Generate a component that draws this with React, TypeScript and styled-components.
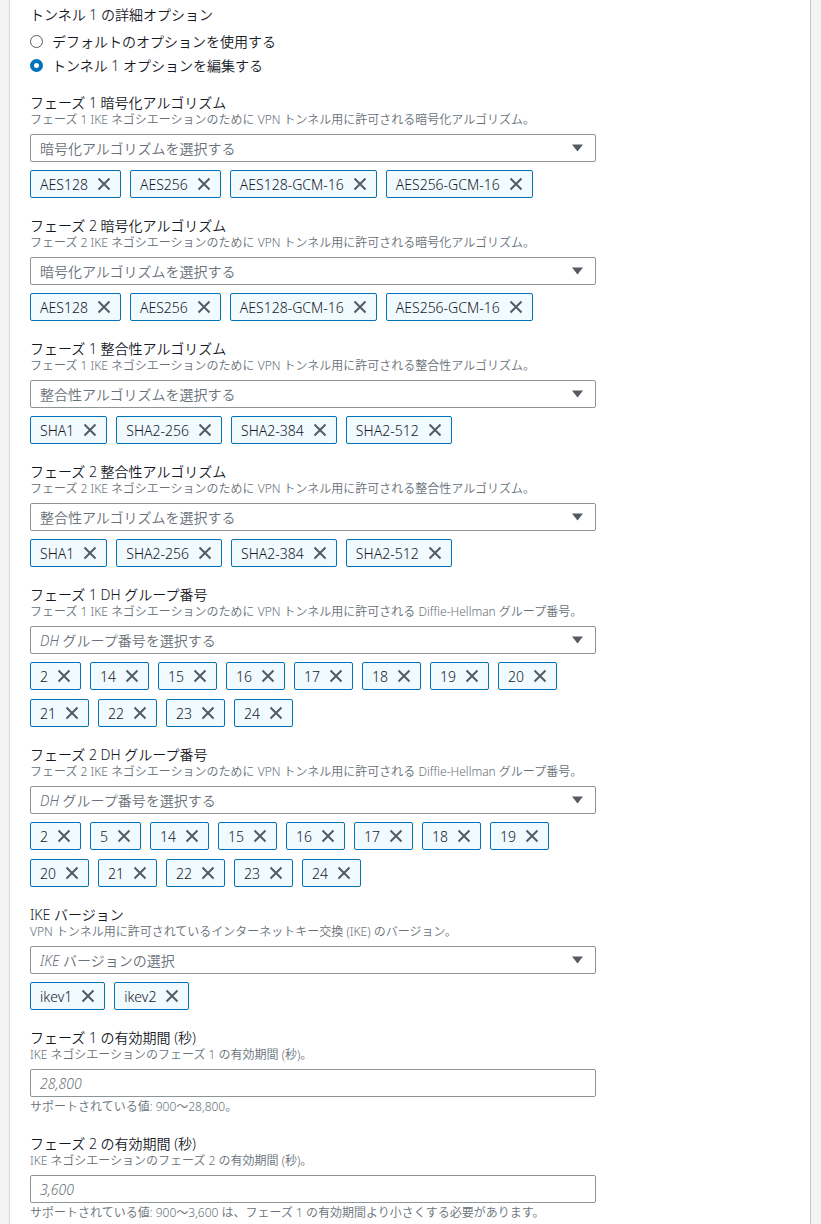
import React from "react";
import styled, { createGlobalStyle } from "styled-components";

const GlobalStyle = createGlobalStyle`
  html, body {
    margin: 0;
    padding: 0;
    background: #f2f3f3;
  }
  body {
    font-family: "Noto Sans", "Noto Sans CJK JP", sans-serif;
    font-weight: 350;
    font-synthesis: none;
    color: #16191f;
  }
`;

const Panel = styled.div`
  margin-left: 9px;
  width: 780px;
  min-height: 1240px;
  background: #ffffff;
  border-left: 1px solid #d5dbdb;
  border-right: 1px solid #c6c6c6;
  padding: 5px 0 0 20px;
`;

const Column = styled.div`
  width: 566px;
  display: flex;
  flex-direction: column;
`;

const Heading = styled.div`
  font-size: 14px;
  line-height: 20px;
`;

const RadioGroup = styled.div`
  display: flex;
  flex-direction: column;
  margin-top: 4px;
  margin-bottom: 17px;
`;

const RadioRow = styled.label`
  display: flex;
  align-items: center;
  gap: 9px;
  height: 24px;
  font-size: 14px;
`;

const RadioDot = styled.span<{ $checked?: boolean }>`
  width: 13px;
  height: 13px;
  border-radius: 50%;
  box-sizing: border-box;
  border: ${(p) => (p.$checked ? "4px solid #0073bb" : "1.5px solid #545b64")};
  background: #fff;
`;

const Field = styled.div<{ $gap?: number }>`
  display: flex;
  flex-direction: column;
  margin-bottom: ${(p) => p.$gap ?? 19}px;
`;

const Label = styled.div`
  font-size: 14px;
  line-height: 18px;
`;

const Description = styled.div`
  font-size: 12px;
  line-height: 16px;
  color: #687078;
`;

const Select = styled.div`
  margin-top: 6px;
  height: 28px;
  box-sizing: border-box;
  border: 1px solid #8d9596;
  border-radius: 2px;
  display: flex;
  align-items: center;
  justify-content: space-between;
  padding: 0 12px 0 9px;
`;

const Placeholder = styled.span`
  font-size: 14px;
  font-style: italic;
  color: #687078;
`;

const TagList = styled.div`
  margin-top: 8px;
  display: flex;
  flex-wrap: wrap;
  gap: 9px;
`;

const Tag = styled.div`
  height: 28px;
  box-sizing: border-box;
  border: 1px solid #0073bb;
  border-radius: 2px;
  background: #f1faff;
  display: flex;
  align-items: center;
  gap: 9px;
  padding: 0 9px 0 9px;
  font-size: 14px;
`;

const TextInput = styled.div`
  margin-top: 6px;
  height: 28px;
  box-sizing: border-box;
  border: 1px solid #8d9596;
  border-radius: 2px;
  display: flex;
  align-items: center;
  padding: 0 9px;
`;

const Constraint = styled.div`
  margin-top: 2px;
  font-size: 12px;
  line-height: 16px;
  color: #687078;
`;

const Caret = () => (
  <svg width="11" height="8" viewBox="0 0 11 8">
    <path d="M0 0.5 L11 0.5 L5.5 7.5 Z" fill="#545b64" />
  </svg>
);

const Dismiss = () => (
  <svg width="14" height="14" viewBox="0 0 14 14">
    <path d="M1.5 1.5 L12.5 12.5 M12.5 1.5 L1.5 12.5" stroke="#545b64" strokeWidth="2" fill="none" />
  </svg>
);

type MultiField = {
  label: string;
  desc: string;
  placeholder: string;
  tags: string[];
};

const aes = ["AES128", "AES256", "AES128-GCM-16", "AES256-GCM-16"];
const sha = ["SHA1", "SHA2-256", "SHA2-384", "SHA2-512"];
const dh1 = ["2", "14", "15", "16", "17", "18", "19", "20", "21", "22", "23", "24"];
const dh2 = ["2", "5", "14", "15", "16", "17", "18", "19", "20", "21", "22", "23", "24"];

const multiFields: MultiField[] = [
  {
    label: "フェーズ 1 暗号化アルゴリズム",
    desc: "フェーズ 1 IKE ネゴシエーションのために VPN トンネル用に許可される暗号化アルゴリズム。",
    placeholder: "暗号化アルゴリズムを選択する",
    tags: aes,
  },
  {
    label: "フェーズ 2 暗号化アルゴリズム",
    desc: "フェーズ 2 IKE ネゴシエーションのために VPN トンネル用に許可される暗号化アルゴリズム。",
    placeholder: "暗号化アルゴリズムを選択する",
    tags: aes,
  },
  {
    label: "フェーズ 1 整合性アルゴリズム",
    desc: "フェーズ 1 IKE ネゴシエーションのために VPN トンネル用に許可される整合性アルゴリズム。",
    placeholder: "整合性アルゴリズムを選択する",
    tags: sha,
  },
  {
    label: "フェーズ 2 整合性アルゴリズム",
    desc: "フェーズ 2 IKE ネゴシエーションのために VPN トンネル用に許可される整合性アルゴリズム。",
    placeholder: "整合性アルゴリズムを選択する",
    tags: sha,
  },
  {
    label: "フェーズ 1 DH グループ番号",
    desc: "フェーズ 1 IKE ネゴシエーションのために VPN トンネル用に許可される Diffie-Hellman グループ番号。",
    placeholder: "DH グループ番号を選択する",
    tags: dh1,
  },
  {
    label: "フェーズ 2 DH グループ番号",
    desc: "フェーズ 2 IKE ネゴシエーションのために VPN トンネル用に許可される Diffie-Hellman グループ番号。",
    placeholder: "DH グループ番号を選択する",
    tags: dh2,
  },
  {
    label: "IKE バージョン",
    desc: "VPN トンネル用に許可されているインターネットキー交換 (IKE) のバージョン。",
    placeholder: "IKE バージョンの選択",
    tags: ["ikev1", "ikev2"],
  },
];

const lifetimes = [
  {
    label: "フェーズ 1 の有効期間 (秒)",
    desc: "IKE ネゴシエーションのフェーズ 1 の有効期間 (秒)。",
    value: "28,800",
    note: "サポートされている値: 900～28,800。",
  },
  {
    label: "フェーズ 2 の有効期間 (秒)",
    desc: "IKE ネゴシエーションのフェーズ 2 の有効期間 (秒)。",
    value: "3,600",
    note: "サポートされている値: 900～3,600 は、フェーズ 1 の有効期間より小さくする必要があります。",
  },
];

export default function App() {
  return (
    <>
      <GlobalStyle />
      <Panel>
        <Column>
          <Heading>トンネル 1 の詳細オプション</Heading>
          <RadioGroup>
            <RadioRow>
              <RadioDot />
              デフォルトのオプションを使用する
            </RadioRow>
            <RadioRow>
              <RadioDot $checked />
              トンネル 1 オプションを編集する
            </RadioRow>
          </RadioGroup>

          {multiFields.map((f) => (
            <Field key={f.label}>
              <Label>{f.label}</Label>
              <Description>{f.desc}</Description>
              <Select>
                <Placeholder>{f.placeholder}</Placeholder>
                <Caret />
              </Select>
              <TagList>
                {f.tags.map((t) => (
                  <Tag key={t}>
                    {t}
                    <Dismiss />
                  </Tag>
                ))}
              </TagList>
            </Field>
          ))}

          {lifetimes.map((f) => (
            <Field key={f.label} $gap={20}>
              <Label>{f.label}</Label>
              <Description>{f.desc}</Description>
              <TextInput>
                <Placeholder>{f.value}</Placeholder>
              </TextInput>
              <Constraint>{f.note}</Constraint>
            </Field>
          ))}
        </Column>
      </Panel>
    </>
  );
}
